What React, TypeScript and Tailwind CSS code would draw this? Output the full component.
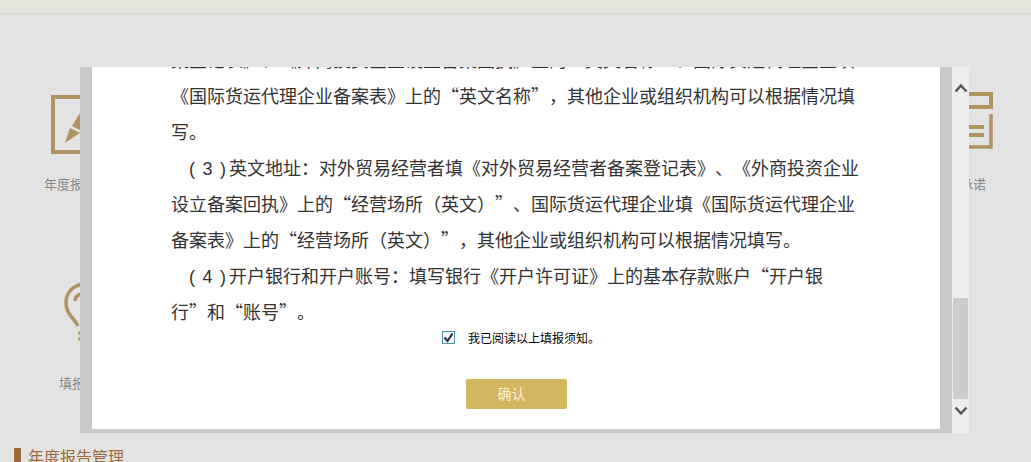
function PenIcon() {
  return (
    <svg width="58" height="60" viewBox="0 0 58 60" fill="none">
      <path d="M56 2H2V57H56" stroke="#b0935f" strokeWidth="4" />
      <path d="M14 48L19 33L29 38Z" fill="#b0935f" />
      <path d="M21 31L29 18L40 26L31 36Z" fill="#b0935f" />
    </svg>
  );
}

function BulbIcon() {
  return (
    <svg width="40" height="60" viewBox="0 0 40 60" fill="none">
      <path d="M14 44C10 36 2 32 2 21C2 9 11 2 22 2" stroke="#b0935f" strokeWidth="3.5" />
      <path d="M11 19C11 16 13 13 17 12" stroke="#b0935f" strokeWidth="3.5" />
      <path d="M14 51H24M14 57H24" stroke="#b0935f" strokeWidth="3" />
    </svg>
  );
}

function ListIcon() {
  return (
    <svg width="24" height="58" viewBox="0 0 24 58" fill="none">
      <path d="M0 2H22V15H0" stroke="#b0935f" strokeWidth="4" />
      <path d="M22 22V55H0" stroke="#b0935f" strokeWidth="3.5" />
      <path d="M0 35H15M0 43H15" stroke="#b0935f" strokeWidth="4" />
    </svg>
  );
}

function Num({ n }: { n: number }) {
  return <span className="mr-[3px] font-['Liberation_Sans'] leading-none [word-spacing:2.5px]">{`( ${n} )`}</span>;
}

function Colon() {
  return <span className="font-['Noto_Sans_CJK_TC'] leading-none">：</span>;
}

export default function App() {
  return (
    <div
      lang="zh-CN"
      className="relative h-[462px] w-[1031px] overflow-hidden bg-[#e3e3e3] font-['Noto_Sans_CJK_SC','Liberation_Sans',sans-serif] [text-spacing-trim:space-all]"
    >
      <div className="h-[15px] border-b-2 border-[#dcdbd3] bg-[#e5e4dd]" />

      <div className="flex justify-between">
        <div className="ml-[44px] flex w-[80px] flex-col pt-[80px]">
          <div className="ml-[7px]">
            <PenIcon />
          </div>
          <span className="mt-[20px] text-[13px] leading-[18px] text-[#888]">年度报告</span>
          <div className="ml-[20px] mt-[89px]">
            <BulbIcon />
          </div>
          <span className="ml-[15px] mt-[32px] text-[13px] leading-[18px] text-[#888]">填报须知</span>
        </div>
        <div className="mr-[38px] flex flex-col items-end pt-[77px]">
          <ListIcon />
          <span className="mr-[7px] mt-[25px] text-[13px] leading-[18px] text-[#888]">承诺</span>
        </div>
      </div>

      <div className="absolute bottom-0 left-[14px] flex h-[14px] items-start">
        <div className="h-[14px] w-[7px] bg-[#9b6b3c]" />
        <span className="ml-[7px] -mt-[2px] text-[16px] leading-[20px] text-[#9b6b3c]">年度报告管理</span>
      </div>

      {/* modal over the page */}
      <div className="absolute left-[80px] top-[67px] flex h-[366px] w-[889px]">
        <div className="h-full w-[872px] border-x-[12px] border-b-[4px] border-[#c8c8c8] bg-white">
          <div className="flex h-full flex-col overflow-hidden px-[79px]">
            <div className="-mt-[26px] text-[18px] leading-[36px] text-[#333]">
              <p>案登记表》、《外商投资企业设立备案回执》上的“英文名称”、国际货运代理企业填《国际货运代理企业备案表》上的“英文名称”，其他企业或组织机构可以根据情况填写。</p>
              <p className="indent-[18px]">
                <Num n={3} />英文地址<Colon />对外贸易经营者填《对外贸易经营者备案登记表》、《外商投资企业设立备案回执》上的“经营场所（英文）”、国际货运代理企业填《国际货运代理企业备案表》上的“经营场所（英文）”，其他企业或组织机构可以根据情况填写。
              </p>
              <p className="indent-[18px]">
                <Num n={4} />开户银行和开户账号<Colon />填写银行《开户许可证》上的基本存款账户“开户银<br />行”和“账号”。
              </p>
            </div>
            <label className="flex h-[17px] items-center pl-[271px] text-[12px] leading-[16px] text-black">
              <span className="mr-[13px] flex h-[13px] w-[13px] items-center justify-center border border-[#4f90b0] bg-[#f4f7f9]">
                <svg width="11" height="11" viewBox="0 0 11 11" fill="none">
                  <path d="M1.5 5.5L4.5 9L9.5 1.5" stroke="#2b3245" strokeWidth="2.2" />
                </svg>
              </span>
              我已阅读以上填报须知。
            </label>
            <button className="mx-auto mt-[33px] h-[30px] w-[101px] shrink-0 rounded-[2px] bg-[#d4b560] pb-[2px] pr-[9px] text-[14px] text-[#fbf3dc]">确认</button>
          </div>
        </div>
        <div className="flex h-full w-[17px] flex-col items-center bg-[#eeeeee]">
          <svg className="mt-[15px] shrink-0" width="14" height="12" viewBox="0 0 14 12" fill="none">
            <path d="M1.5 9.5L7 3.5L12.5 9.5" stroke="#555" strokeWidth="2.5" />
          </svg>
          <div className="mt-[204px] h-[101px] w-[15px] shrink-0 bg-[#cccccc]" />
          <svg className="mt-[6px] shrink-0" width="14" height="12" viewBox="0 0 14 12" fill="none">
            <path d="M1.5 2.5L7 8.5L12.5 2.5" stroke="#555" strokeWidth="2.5" />
          </svg>
        </div>
      </div>
    </div>
  );
}
